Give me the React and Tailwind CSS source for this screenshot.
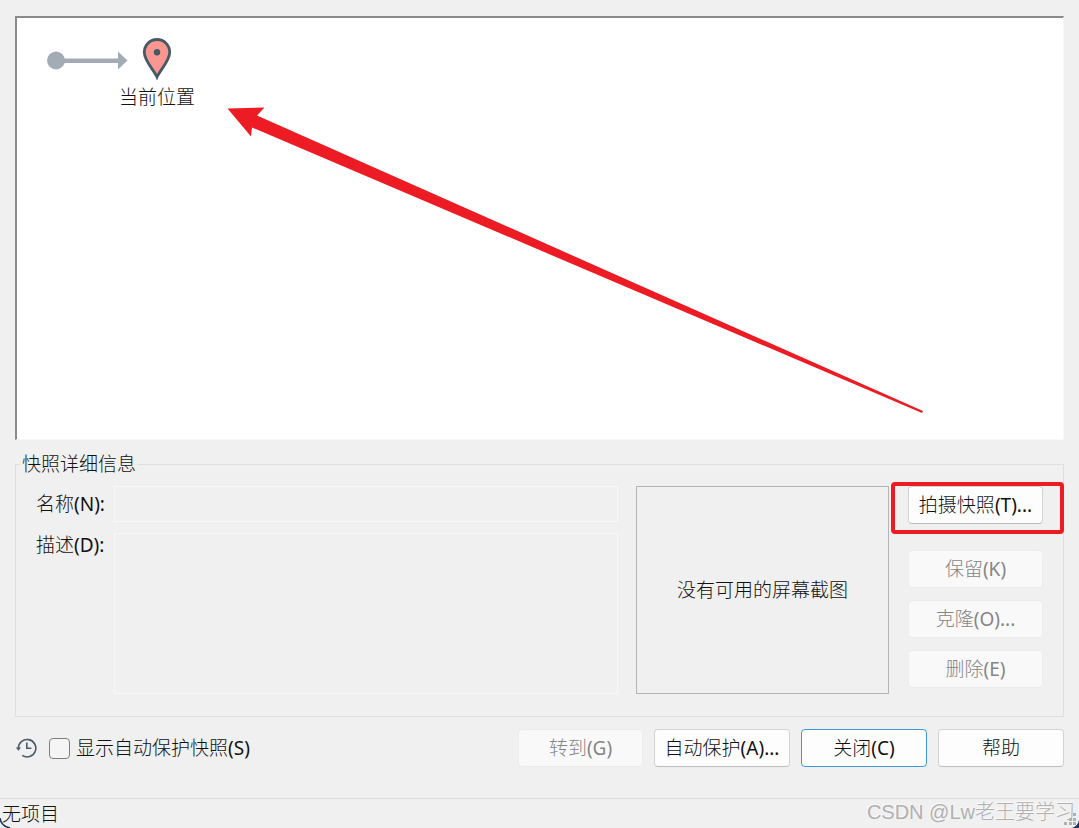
const fontStack = "font-['Noto_Sans','Noto_Sans_CJK_SC',sans-serif]"

const variants = {
  normal: 'bg-[#fdfdfd] border-[#d3d3d3] border-b-[#bdbdbd] text-[#111111]',
  primary: 'bg-[#fdfdfd] border-[#3f98dc] text-[#111111]',
  disabled: 'bg-[#f9f9f9] border-[#ececec] text-[#858585]',
}

// "(N)" style accelerator after a caption
function Hotkey({ children }) {
  return <span className="font-normal">{children}</span>
}

function DialogButton({ variant = 'normal', className = '', children }) {
  return (
    <button
      type="button"
      disabled={variant === 'disabled'}
      className={`h-[38px] rounded border whitespace-nowrap ${variants[variant]} ${className}`}
    >
      {children}
    </button>
  )
}

function HistoryIcon() {
  return (
    <svg width="22" height="20" viewBox="0 0 22 20" fill="none" stroke="#4a5b6a" strokeWidth="1.6">
      <path d="M3.4 10.5A8.7 8.7 0 1 1 7.2 17.4" />
      <path d="M0.8 9.6H6L3.4 12.8Z" fill="#4a5b6a" stroke="none" />
      <path d="M11.8 4.6V10.2H16.4" />
    </svg>
  )
}

function SizeGrip() {
  return (
    <svg className="absolute right-0 bottom-0" width="18" height="18" viewBox="0 0 18 18">
      <g fill="#b0b0b0">
        <rect x="12" y="3" width="3" height="3" />
        <rect x="8" y="8" width="3" height="3" />
        <rect x="12" y="8" width="3" height="3" />
        <rect x="3" y="12" width="3" height="3" />
        <rect x="8" y="12" width="3" height="3" />
        <rect x="12" y="12" width="3" height="3" />
      </g>
      <path d="M18 10Q17 16 11 18H18Z" fill="#1d3658" />
    </svg>
  )
}

function SnapshotCanvas() {
  return (
    <div className="relative h-[424px] overflow-hidden bg-white border-t-2 border-l-2 border-b border-r border-t-[#8a8a8a] border-l-[#8a8a8a] border-b-[#f8f8f8] border-r-[#f8f8f8]">
      <svg className="absolute left-[30px] top-[32px]" width="82" height="20" viewBox="0 0 82 20" fill="#a3acb4">
        <circle cx="9" cy="10.5" r="9" />
        <rect x="9" y="8.5" width="64" height="4.5" />
        <path d="M71 1.5L80.5 10.5L71 19.5Z" />
      </svg>
      <div className="absolute left-[92px] top-[19px] w-24 flex flex-col items-center gap-1">
        <svg width="30" height="44" viewBox="0 0 30 44">
          <path
            d="M15 40C12 33 2.3 24 2.3 15.2A12.7 12.7 0 0 1 27.7 15.2C27.7 24 18 33 15 40Z"
            fill="#fc9690"
            stroke="#465967"
            strokeWidth="2.8"
          />
          <circle cx="15" cy="15.3" r="3.2" fill="#465967" />
        </svg>
        <span className="leading-6 whitespace-nowrap">当前位置</span>
      </div>
      <svg className="absolute left-[208px] top-[84px]" width="700" height="312" viewBox="0 0 700 312" fill="#ed1c24">
        <path d="M2.5 6.5L39.5 5.5L32 13.5L698 309L697 311L27 25.5L26 34.5Z" />
      </svg>
    </div>
  )
}

export default function App() {
  return (
    <div className={`relative min-h-screen flex flex-col overflow-hidden bg-[#f0f0f0] text-[19px] leading-6 font-light text-[#111111] ${fontStack}`}>
      <main className="flex-1 pt-4 px-[15px]">
        <SnapshotCanvas />

        <fieldset className="mt-3 min-w-0 border border-[#dfdfdf] px-5 pt-[10px] pb-[22px]">
          <legend className="-ml-[16px] px-[2px]">快照详细信息</legend>
          <div className="flex items-start">
            <div className="flex-1 min-w-0 grid grid-cols-[78px_1fr] gap-y-[11px]">
              <label htmlFor="name" className="pt-[6px]">名称<Hotkey>(N):</Hotkey></label>
              <input id="name" readOnly className="h-9 min-w-0 border border-[#f8f8f8] bg-transparent px-2 outline-none" />
              <label htmlFor="desc">描述<Hotkey>(D):</Hotkey></label>
              <textarea id="desc" readOnly className="h-[161px] min-w-0 resize-none border border-[#f8f8f8] bg-transparent px-2 outline-none" />
            </div>
            <div className="ml-[18px] w-[253px] h-[208px] shrink-0 flex items-center justify-center border border-[#b4b4b4]">
              没有可用的屏幕截图
            </div>
            <div className="ml-[19px] w-[135px] shrink-0 flex flex-col gap-3">
              <div className="relative mb-[14px]">
                <DialogButton className="w-full">拍摄快照<Hotkey>(T)...</Hotkey></DialogButton>
                <div className="pointer-events-none absolute -left-[17px] -right-[21px] -top-1 -bottom-[10px] border-4 border-[#ed1c24] rounded-sm" />
              </div>
              <DialogButton variant="disabled">保留<Hotkey>(K)</Hotkey></DialogButton>
              <DialogButton variant="disabled">克隆<Hotkey>(O)...</Hotkey></DialogButton>
              <DialogButton variant="disabled">删除<Hotkey>(E)</Hotkey></DialogButton>
            </div>
          </div>
        </fieldset>

        <div className="mt-3 flex items-center">
          <HistoryIcon />
          <label className="ml-3 flex items-center gap-[6px]">
            <input
              type="checkbox"
              className="size-[21px] appearance-none rounded border border-[#7e7e7e] bg-[#f5f5f5] checked:bg-[#3f98dc]"
            />
            <span>显示自动保护快照<Hotkey>(S)</Hotkey></span>
          </label>
          <div className="ml-auto flex gap-[11px]">
            <DialogButton variant="disabled" className="w-[125px]">转到<Hotkey>(G)</Hotkey></DialogButton>
            <DialogButton className="w-[136px]">自动保护<Hotkey>(A)...</Hotkey></DialogButton>
            <DialogButton variant="primary" className="w-[126px]">关闭<Hotkey>(C)</Hotkey></DialogButton>
            <DialogButton className="w-[126px]">帮助</DialogButton>
          </div>
        </div>
      </main>

      <footer className="relative flex h-[30px] items-center justify-between border-t border-[#dcdcdc] pl-[2px] pr-1">
        <span>无项目</span>
        <span className="pb-1 text-xl font-['Liberation_Sans','Noto_Sans_CJK_SC',sans-serif] text-[#b0b0b0] [text-shadow:-1px_-1px_0_#fafafa]">
          CSDN @Lw老王要学习
        </span>
        <svg className="absolute left-0 bottom-0" width="12" height="12" viewBox="0 0 12 12" fill="none" stroke="#1d3658" strokeWidth="1.5">
          <path d="M0 2Q1 10 10 12" />
        </svg>
        <SizeGrip />
      </footer>
    </div>
  )
}
